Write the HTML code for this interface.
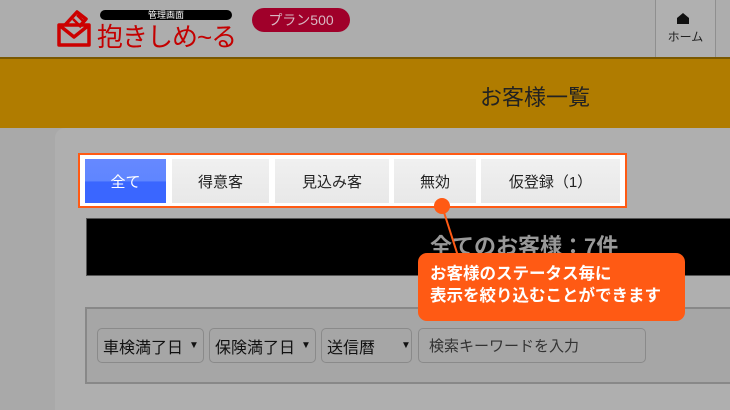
<!DOCTYPE html>
<html><head><meta charset="utf-8"><style>
*{margin:0;padding:0;box-sizing:border-box}
html,body{width:730px;height:410px;overflow:hidden}
body{background:#a9a9a9;font-family:"Liberation Sans","Noto Sans CJK JP",sans-serif;position:relative}
.a{position:absolute}
.tab{position:absolute;top:159px;height:44px;background:linear-gradient(#f0f0f0,#e8e8e8);display:flex;align-items:center;justify-content:center;font-size:15px;color:#222}
.sel{position:absolute;top:328px;height:35px;border:1px solid #8a8a8a;border-radius:5px;background:#a6a6a6;font-size:16px;color:#111;display:flex;align-items:center;padding-left:5px}
</style></head><body>
<div class="a" style="left:0;top:0;width:730px;height:57px;background:#adadad"></div>
<div class="a" style="left:655px;top:0;width:61px;height:57px;border-left:1px solid #8f8f8f;border-right:1px solid #8f8f8f;background:#b0b0b0"></div>
<svg class="a" style="left:677px;top:13px" width="12" height="11" viewBox="0 0 12 11"><path d="M6 0L12 5V11H0V5Z" fill="#111"/></svg>
<div class="a" style="left:656px;top:28px;width:59px;text-align:center;font-size:12px;color:#222">ホーム</div>
<svg class="a" style="left:55px;top:9px" width="38" height="38" viewBox="0 0 38 38"><path d="M4 16H34V36H4Z M4 16L19 28L34 16" fill="none" stroke="#c00" stroke-width="3.5" stroke-linejoin="round"/><path d="M10 16L22 3L31 10L24 18" fill="none" stroke="#c00" stroke-width="3.5" stroke-linejoin="round"/><path d="M18 10L24 16M22 6L28 12" stroke="#c00" stroke-width="2.5"/></svg>
<div class="a" style="left:100px;top:10px;width:132px;height:10px;background:#000;border-radius:5px;color:#fff;font-size:9px;line-height:10px;text-align:center">管理画面</div>
<div class="a" style="left:97px;top:17px;font-size:26px;color:#c40000;letter-spacing:-1px">抱きしめ~る</div>
<div class="a" style="left:252px;top:8px;width:98px;height:24px;border-radius:12px;background:#a0002a;color:#d9b7c2;font-size:14px;line-height:24px;text-align:center">プラン500</div>
<div class="a" style="left:0;top:57px;width:730px;height:71px;background:#b07c00;border-top:2px solid #7a5800"></div>
<div class="a" style="left:55px;top:128px;width:700px;height:300px;background:#afafaf;border-radius:10px 0 0 0"></div>
<div class="a" style="left:0;top:80px;width:1070px;text-align:center;font-size:22px;color:#222">お客様一覧</div>
<div class="a" style="left:78px;top:153px;width:549px;height:55px;border:2px solid #ff5a14;background:#fff"></div>
<div class="tab" style="left:85px;width:81px;background:linear-gradient(#6688ff 0%,#5f86ff 50%,#3a66ff 52%,#3a66ff);color:#fff">全て</div>
<div class="tab" style="left:172px;width:97px">得意客</div>
<div class="tab" style="left:275px;width:114px">見込み客</div>
<div class="tab" style="left:394px;width:82px">無効</div>
<div class="tab" style="left:481px;width:139px">仮登録（1）</div>
<div class="a" style="left:86px;top:218px;width:660px;height:58px;background:#000;border:1px solid #555"></div>
<div class="a" style="left:430px;top:229px;font-size:22px;font-weight:bold;color:#999">全てのお客様：7件</div>
<div class="a" style="left:85px;top:307px;width:660px;height:77px;border:2px solid #888;background:#a6a6a6"></div>
<div class="sel" style="left:97px;width:107px">車検満了日<span style="font-size:10px;margin-left:6px">▼</span></div>
<div class="sel" style="left:209px;width:107px">保険満了日<span style="font-size:10px;margin-left:6px">▼</span></div>
<div class="sel" style="left:321px;width:91px">送信暦<span style="font-size:10px;margin-left:26px">▼</span></div>
<div class="sel" style="left:418px;width:228px;padding-left:10px;font-size:15px;color:#333">検索キーワードを入力</div>
<svg class="a" style="left:430px;top:196px" width="40" height="62"><line x1="12" y1="10" x2="28" y2="60" stroke="#ff5a14" stroke-width="2"/><circle cx="12" cy="10" r="8" fill="#ff5a14"/></svg>
<div class="a" style="left:418px;top:253px;width:267px;height:68px;background:#ff5a14;border-radius:9px;color:#fff;font-size:16.5px;font-weight:bold;line-height:22px;padding:10px 0 0 12px;white-space:nowrap">お客様のステータス毎に<br>表示を絞り込むことができます</div>
</body></html>
